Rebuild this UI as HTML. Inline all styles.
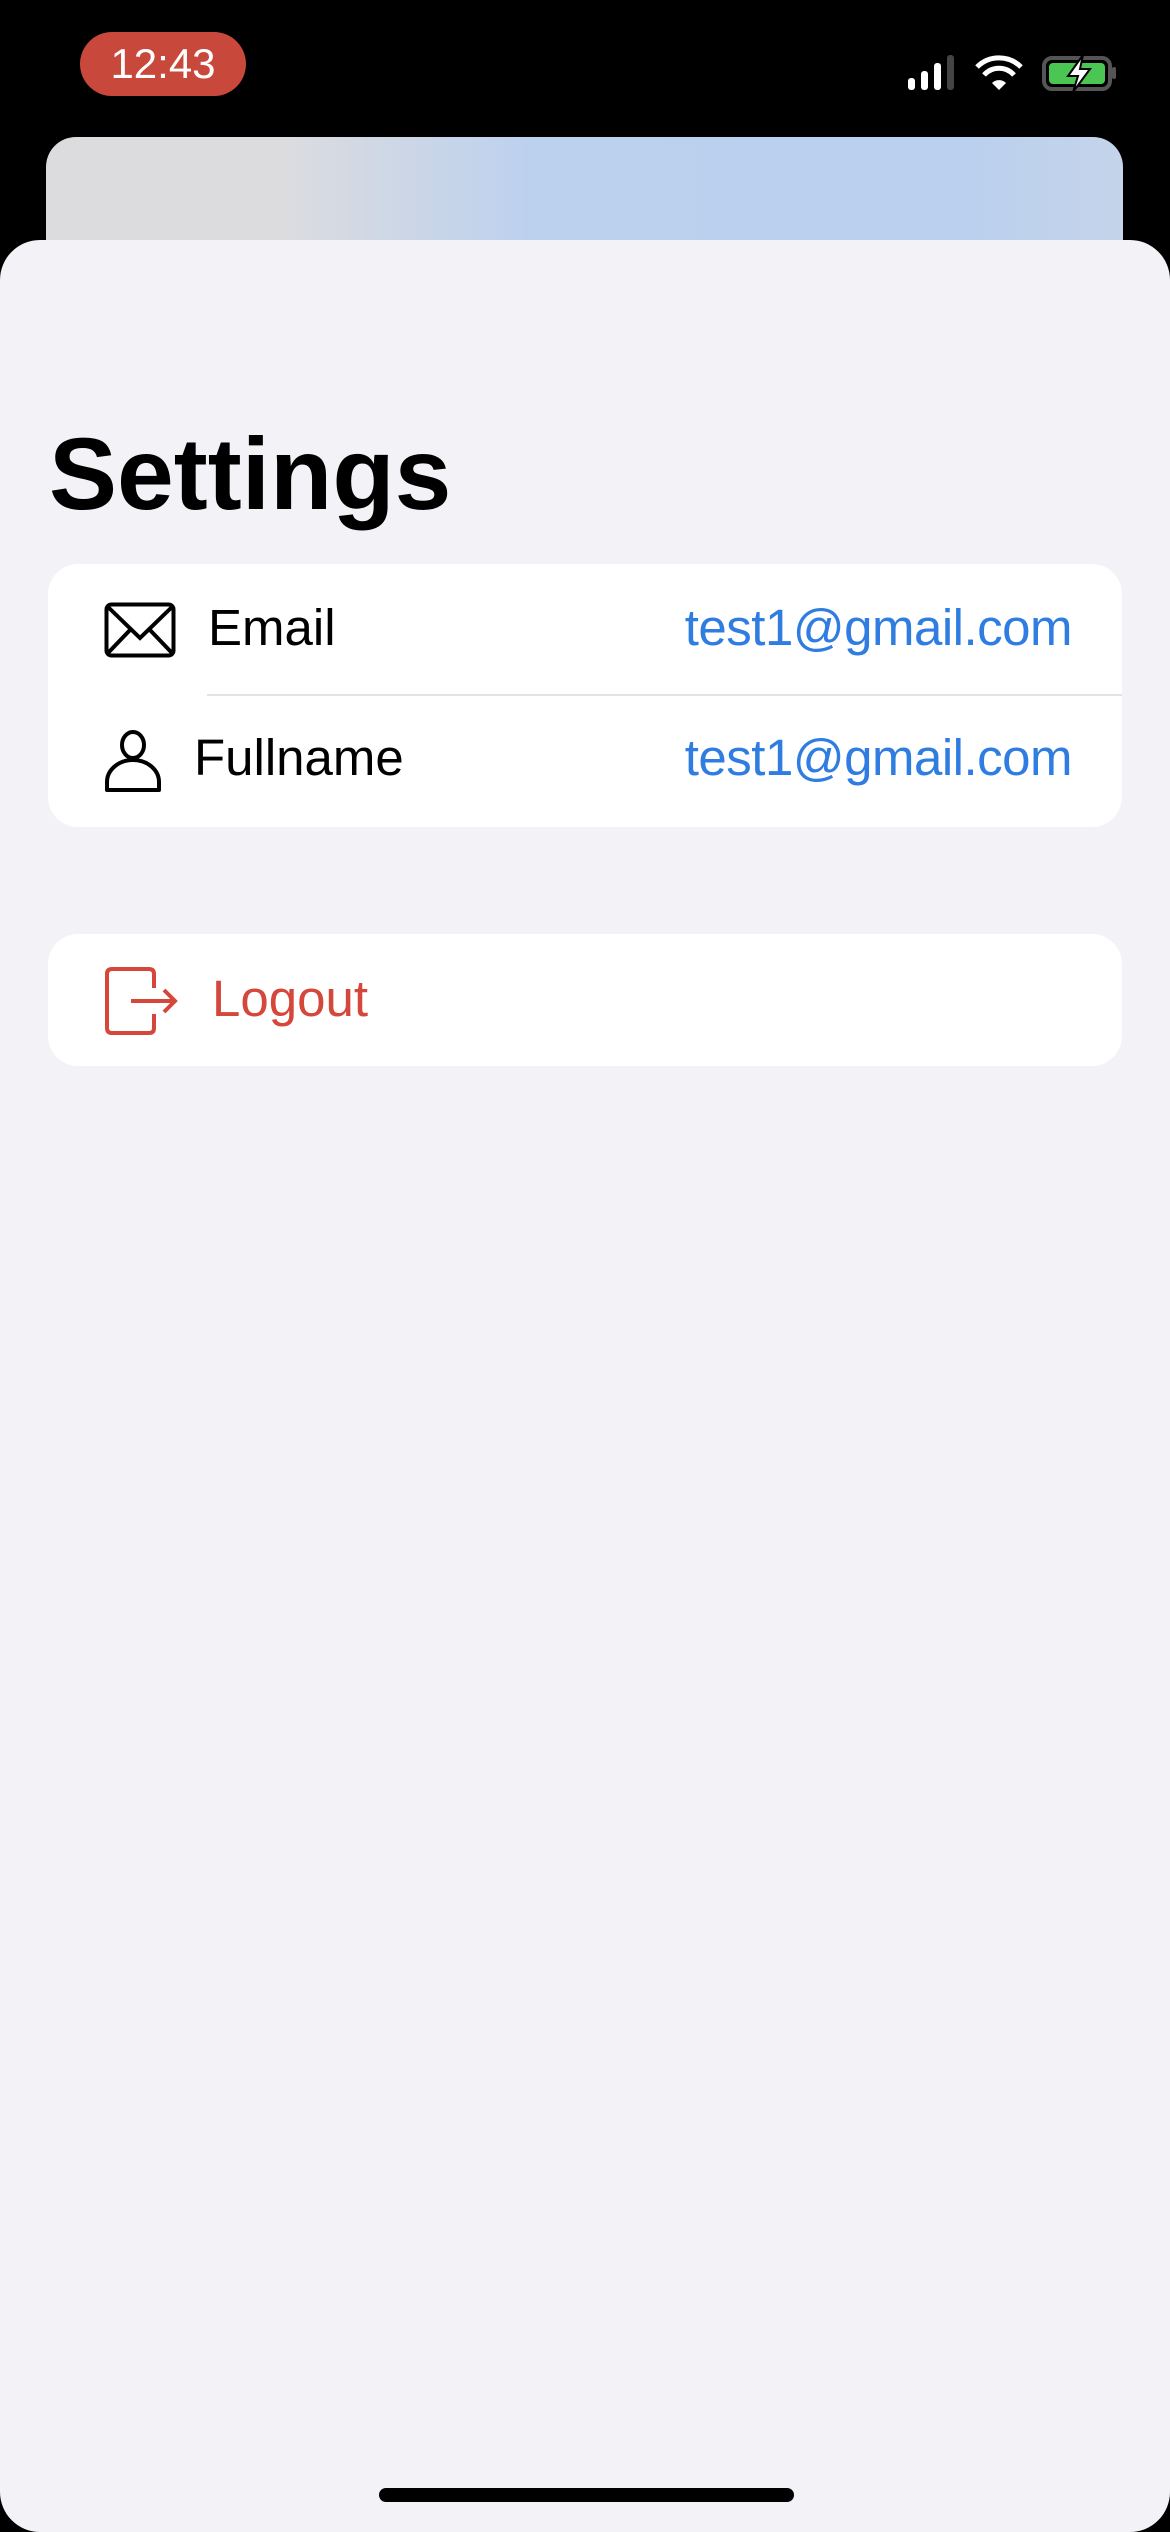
<!DOCTYPE html>
<html><head><meta charset="utf-8"><style>
*{margin:0;padding:0;box-sizing:border-box}
body{width:1170px;height:2532px;background:#000;position:relative;overflow:hidden;font-family:"Liberation Sans",sans-serif}
.pill{position:absolute;left:80px;top:32px;width:166px;height:64px;border-radius:32px;background:#c8483b;color:#fff;font-size:42px;text-align:center;line-height:64px}
.bgcard{position:absolute;left:46px;top:137px;width:1077px;height:140px;border-radius:30px;background:linear-gradient(90deg,#dcdcdf 0%,#dcdcdf 22%,#bcd1ee 45%,#bad0ee 85%,#c4d4ea 100%)}
.sheet{position:absolute;left:0;top:240px;width:1170px;height:2292px;background:#f2f2f7;border-radius:40px 40px 40px 40px}
h1{position:absolute;left:49px;top:416px;font-size:102px;font-weight:bold;color:#000;letter-spacing:0px}
.card{position:absolute;left:48px;width:1074px;background:#fff;border-radius:30px}
.t{position:absolute;font-size:51px;color:#000}
.v{position:absolute;right:98px;font-size:51px;color:#2f7de1;letter-spacing:-0.5px}
.home{position:absolute;left:379px;top:2488px;width:415px;height:14px;border-radius:7px;background:#000}
</style></head><body>
<div class="pill">12:43</div>
<svg style="position:absolute;left:905px;top:52px" width="215" height="44" viewBox="0 0 215 44">
<rect x="3" y="26" width="7" height="12" rx="3" fill="#fff"/>
<rect x="16" y="19" width="7" height="19" rx="3" fill="#fff"/>
<rect x="29" y="11" width="7" height="27" rx="3" fill="#fff"/>
<rect x="42" y="3" width="7" height="35" rx="3" fill="#444"/>
<path d="M72 15 A31 31 0 0 1 116 15" stroke="#fff" stroke-width="5" fill="none"/>
<path d="M79 23 A20 20 0 0 1 109 23" stroke="#fff" stroke-width="5" fill="none"/>
<path d="M87 31 L94 38 L101 31 A10 10 0 0 0 87 31Z" fill="#fff"/>
<rect x="139" y="6" width="66" height="31" rx="8" fill="none" stroke="#555" stroke-width="4"/>
<rect x="144" y="11" width="56" height="21" rx="4" fill="#4cc653"/>
<rect x="207" y="15" width="4" height="12" rx="2" fill="#555"/>
<path d="M178 3 L163 24 L173 24 L168 40 L185 17 L175 17 Z" fill="#fff" stroke="#000" stroke-width="2"/>
</svg>
<div class="bgcard"></div>
<div class="sheet"></div>
<h1>Settings</h1>
<div class="card" style="top:564px;height:263px">
<div style="position:absolute;left:159px;top:130px;right:0;height:2px;background:#e3e3e6"></div>
</div>
<svg style="position:absolute;left:104px;top:602px" width="72" height="56" viewBox="0 0 72 56"><rect x="2.5" y="2.5" width="67" height="51" rx="5" fill="none" stroke="#000" stroke-width="4"/><path d="M3 4 L36 36 L69 4 M3 52 L27 27 M69 52 L45 27" stroke="#000" stroke-width="4" fill="none"/></svg>
<div class="t" style="left:208px;top:598px">Email</div>
<div class="v" style="top:598px">test1@gmail.com</div>
<svg style="position:absolute;left:104px;top:730px" width="58" height="63" viewBox="0 0 58 63"><ellipse cx="29" cy="15" rx="11" ry="13" fill="none" stroke="#000" stroke-width="4"/><path d="M3 60 L3 52 A26 22 0 0 1 55 52 L55 60 Z" fill="none" stroke="#000" stroke-width="4" stroke-linejoin="round"/></svg>
<div class="t" style="left:194px;top:728px">Fullname</div>
<div class="v" style="top:728px">test1@gmail.com</div>
<div class="card" style="top:934px;height:132px"></div>
<svg style="position:absolute;left:104px;top:966px" width="76" height="70" viewBox="0 0 76 70"><path d="M50 22 V8 Q50 3 45 3 H8 Q3 3 3 8 V62 Q3 67 8 67 H45 Q50 67 50 62 V48" fill="none" stroke="#d4473a" stroke-width="4"/><path d="M27 35 H70 M60 24 L71 35 L60 46" fill="none" stroke="#d4473a" stroke-width="4"/></svg>
<div class="t" style="left:212px;top:969px;color:#d4473a">Logout</div>
<div class="home"></div>
</body></html>
